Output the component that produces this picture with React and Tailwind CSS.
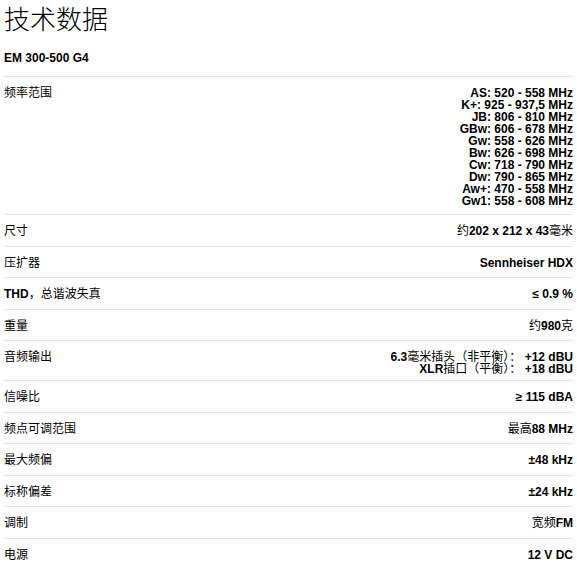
const FREQS = [
  'AS: 520 - 558 MHz',
  'K+: 925 - 937,5 MHz',
  'JB: 806 - 810 MHz',
  'GBw: 606 - 678 MHz',
  'Gw: 558 - 626 MHz',
  'Bw: 626 - 698 MHz',
  'Cw: 718 - 790 MHz',
  'Dw: 790 - 865 MHz',
  'Aw+: 470 - 558 MHz',
  'Gw1: 558 - 608 MHz',
];

const cjk = (t) => <span className="font-normal">{t}</span>;

const ROWS = [
  { label: '频率范围', value: FREQS.map((f) => <div key={f}>{f}</div>) },
  { label: '尺寸', value: <>{cjk('约')}202 x 212 x 43{cjk('毫米')}</> },
  { label: '压扩器', value: 'Sennheiser HDX' },
  { label: <><span className="font-bold">THD</span>，总谐波失真</>, value: '≤ 0.9 %' },
  { label: '重量', value: <>{cjk('约')}980{cjk('克')}</> },
  {
    label: '音频输出',
    pad: 'pb-[5px]',
    value: (
      <>
        <div>6.3{cjk('毫米插头（非平衡）：')} +12 dBU</div>
        <div>XLR{cjk('插口（平衡）：')} +18 dBU</div>
      </>
    ),
  },
  { label: '信噪比', value: '≥ 115 dBA' },
  { label: '频点可调范围', value: <>{cjk('最高')}88 MHz</> },
  { label: '最大频偏', value: '±48 kHz' },
  { label: '标称偏差', value: '±24 kHz' },
  { label: '调制', value: <>{cjk('宽频')}FM</> },
  { label: '电源', value: '12 V DC' },
];

export default function App() {
  return (
    <div className="bg-white px-1 text-black" style={{ fontFamily: '"Liberation Sans", "Noto Sans CJK SC", sans-serif' }}>
      <h1 className="pt-[4px] text-[26px] leading-[32px] font-light">技术数据</h1>
      <div className="mt-[15px] text-[12px] leading-[14px] font-bold">EM 300-500 G4</div>
      <div className="mt-[11px]">
        {ROWS.map((r, i) => (
          <div key={i} className={`flex items-start justify-between border-t border-[#e3e3e3] pt-[10px] ${r.pad || 'pb-[7px]'}`}>
            <div className="text-[12px] leading-[13.5px]">{r.label}</div>
            <div className="text-right text-[12px] leading-[12px] font-bold">{r.value}</div>
          </div>
        ))}
      </div>
    </div>
  );
}
